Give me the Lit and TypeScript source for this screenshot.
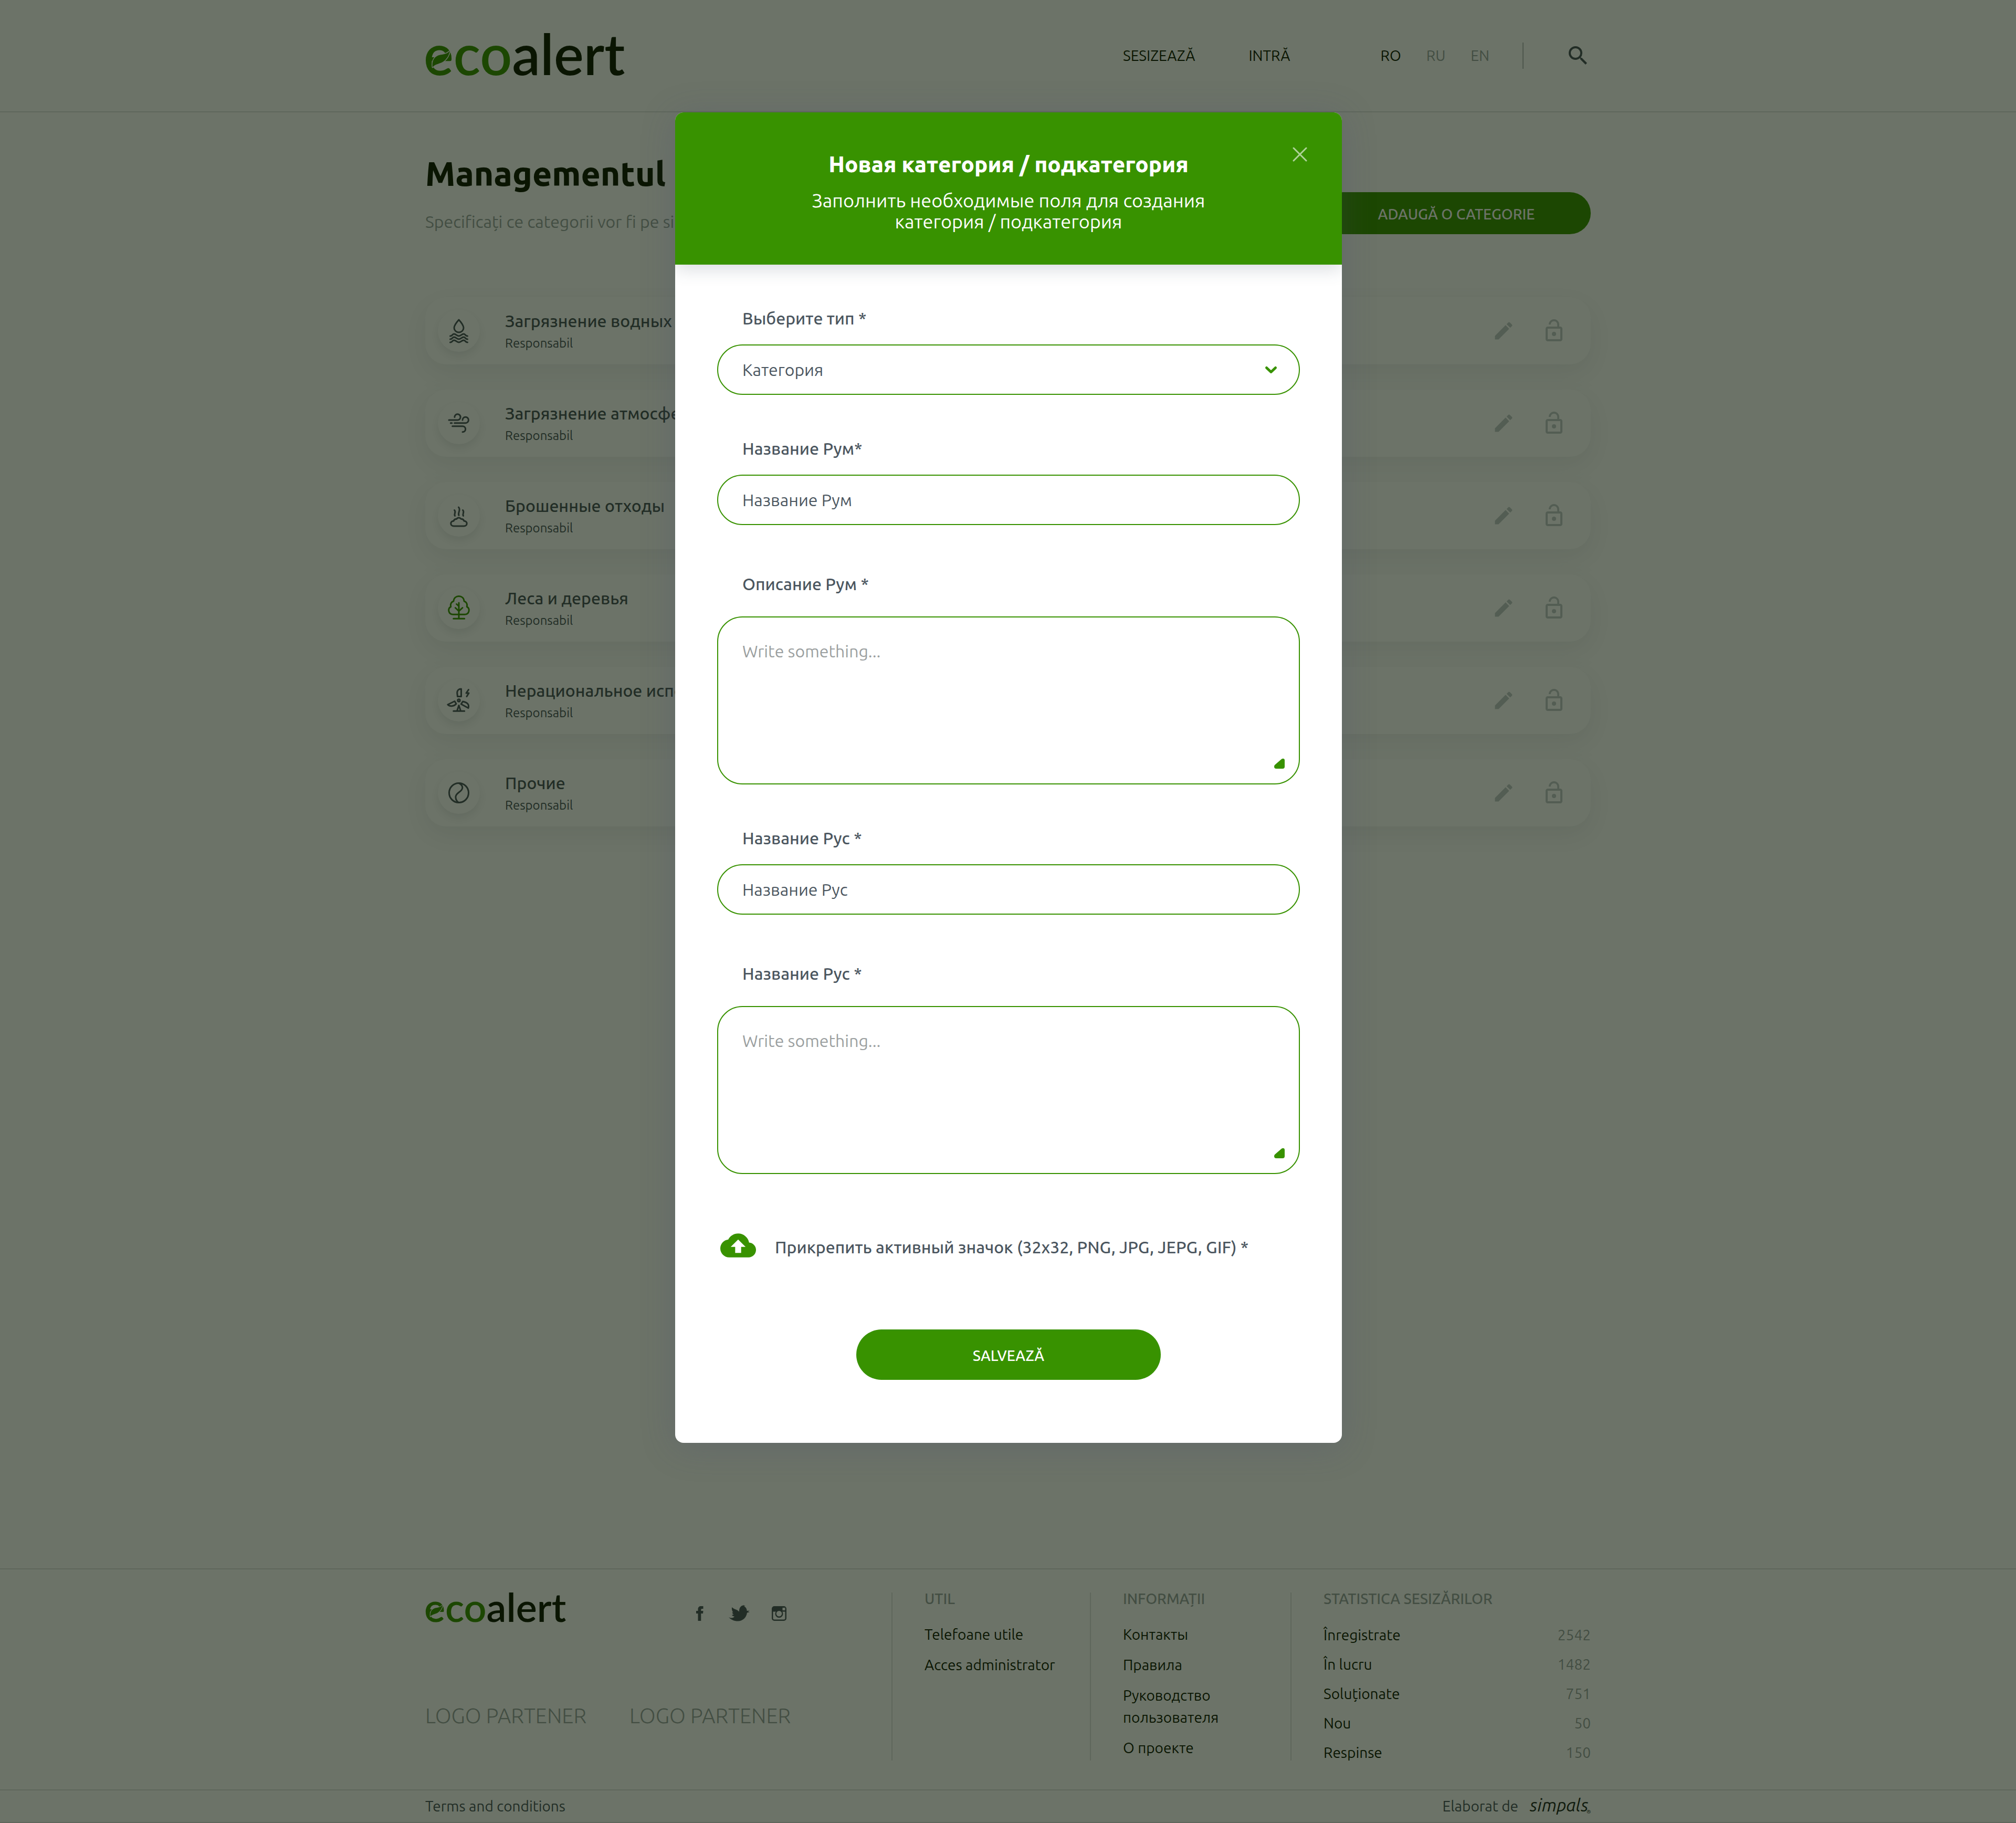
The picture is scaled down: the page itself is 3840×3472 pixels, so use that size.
import { LitElement, html, css, svg } from 'lit';
import { customElement, property, state } from 'lit/decorators.js';
import { classMap } from 'lit/directives/class-map.js';

const FONT = css`"Ubuntu", "Noto Sans", sans-serif`;

const rowIcons = {
  water: svg`
    <path d="M24 3C24 3 15 13 15 18.5a9 8.5 0 0 0 18 0C33 13 24 3 24 3z"/>
    <path d="M7.5 34c4 0 4-4 7.500-4s5 4 9 4 5.500-4 9-4 3.500 4 7.500 4"/>
    <path d="M7.500 40c4 0 4-4 7.500-4s5 4 9 4 5.500-4 9-4 3.500 4 7.500 4"/>
    <path d="M7.500 46c4 0 4-4 7.500-4s5 4 9 4 5.500-4 9-4 3.500 4 7.500 4"/>`,
  wind: svg`
    <path d="M5 18h16.500a5.600 5.600 0 1 0-5.600-5.500"/>
    <path d="M8.300 23.700h2.500M15.700 23.700h21a5.700 5.700 0 1 0-5.700-5.600"/>
    <path d="M11.700 29.700H31c7.500 0 7.500 11 0 11"/>`,
  waste: svg`
    <path d="M23.500 8c5 5-2 10 .5 15.500M15.500 13.500c4 4-1.500 7 1 11M31.500 13.500c4 4-1.500 7 1 11"/>
    <path d="M14.500 44h19c7.500 0 7.500-9.500.500-9.800-1-3-3-4-5.500-3.700-3-3.200-6.500-3.200-9 0-2.500-.300-4.500.700-5.500 3.700-7 .300-7 9.800.500 9.800z"/>`,
  tree: svg`
    <path d="M13 36.200c-9 0-11-11-4.300-14.500-1.500-5 1-9.500 5.300-10.700C14.500 4.500 19 1.500 24 1.500s9.500 3 10 9.500c4.300 1.200 6.800 5.700 5.300 10.700C46 25.200 44 36.200 35 36.200z"/>
    <path d="M24 14v30M19.500 16.500 24 20.500M17.300 23.500 24 30l7-6.500M13.700 44.200h21"/>`,
  turbine: svg`
    <path d="M28.500 2v14.500h-7l-.800-7c0-4.500 3-7.500 7.800-7.500zM42.500 3.500 38 10h5l-4 6.500"/>
    <circle cx="24" cy="24" r="2.200"/>
    <path d="M2.800 32 16 25.500l3 5C14 36 7 36 2.800 32zM31.500 26l-3.200 5L42 38.500C44.500 31 39 27.500 31.500 26z"/>
    <path d="M20.500 44 24 33.500 27.500 44M13.700 44.200h21"/>`,
  other: svg`
    <circle cx="24" cy="24" r="18.500"/>
    <path d="M24 5.500c6 2.500 8.500 8 5.500 12.500-3 4.800-10.500 6.500-11.500 13-.500 5 1.500 8.500 5.500 11.500"/>`,
};

type IconName = keyof typeof rowIcons;

interface Category {
  icon: IconName;
  title: string;
  active?: boolean;
}

@customElement('eco-logo')
class EcoLogo extends LitElement {
  static styles = css`
    :host { display: block; }
    .mark { display: block; width: 100%; height: auto; overflow: visible; }
    .word { font: 600 107px "Lato", sans-serif; fill: #0a1600; }
    .eco { fill: #389200; }
    .leaf { fill: #389200; stroke: #fff; stroke-width: 3; stroke-linejoin: round; paint-order: stroke; }
  `;
  render() {
    return html`
      <svg class="mark" viewBox="0 0 380 84" role="img" aria-label="ecoalert">
        <text class="word" x="-3" y="80"><tspan class="eco">eco</tspan>alert</text>
        <path class="leaf" d="M14 65c-2-15 6-23 18-24 6-1 11-3 15-7-2 9-6 15-11 19-7 6-17 5-22 12z"/>
      </svg>`;
  }
}

@customElement('category-row')
class CategoryRow extends LitElement {
  @property({ attribute: false }) category!: Category;
  static styles = css`
    :host { display: block; }
    .card {
      display: flex; align-items: center; box-sizing: border-box; height: 128px;
      padding: 0 46px 0 24px; border-radius: 40px; background: #fff;
      box-shadow: 0 16px 48px rgba(70, 82, 90, 0.1);
    }
    .badge {
      display: grid; place-items: center; width: 80px; height: 80px; border-radius: 50%;
      background: #fff; box-shadow: 0 8px 16px rgba(70, 82, 90, 0.12);
    }
    .glyph {
      width: 48px; height: 48px; fill: none; stroke: #46525a; stroke-width: 3;
      stroke-linecap: round; stroke-linejoin: round;
    }
    .active { stroke: #389200; }
    .text { flex: 1; display: flex; flex-direction: column; gap: 8px; padding-left: 48px; }
    .title { margin: 0; font: 550 32px/40px ${FONT}; color: #46525a; }
    .role { margin: 0; font: 400 24px/30px ${FONT}; color: #46525a; }
    .actions { display: flex; align-items: center; gap: 50px; }
    .action { display: block; padding: 0; border: 0; background: none; }
    .tool { display: block; width: 48px; height: 48px; fill: #c0c8ca; }
    .edit { width: 44px; height: 44px; }
  `;
  render() {
    const c = this.category;
    return html`
      <article class="card">
        <span class="badge">
          <svg class=${classMap({ glyph: true, active: !!c.active })} viewBox="0 0 48 48" aria-hidden="true">${rowIcons[c.icon]}</svg>
        </span>
        <div class="text">
          <h2 class="title">${c.title}</h2>
          <p class="role">Responsabil</p>
        </div>
        <div class="actions">
          <button class="action" type="button">
            <svg class="tool edit" viewBox="0 0 24 24"><path d="M3 17.250V21h3.750L17.810 9.940l-3.750-3.750L3 17.250zM20.710 7.040a.996.996 0 0 0 0-1.410l-2.340-2.340a.996.996 0 0 0-1.410 0l-1.830 1.830 3.750 3.750 1.830-1.830z"/></svg>
          </button>
          <button class="action" type="button">
            <svg class="tool" viewBox="0 0 24 24"><path d="M12 17a2 2 0 1 0 0-4 2 2 0 0 0 0 4zm6-9h-1V6c0-2.760-2.240-5-5-5S7 3.240 7 6h1.900c0-1.710 1.390-3.100 3.100-3.100s3.100 1.390 3.100 3.100v2H6c-1.100 0-2 .9-2 2v10c0 1.100.9 2 2 2h12c1.100 0 2-.9 2-2V10c0-1.100-.9-2-2-2zm0 12H6V10h12v10z"/></svg>
          </button>
        </div>
      </article>`;
  }
}

@customElement('category-dialog')
class CategoryDialog extends LitElement {
  static styles = css`
    :host { display: block; font-family: ${FONT}; }
    .dialog {
      position: relative; border-radius: 16px; background: #fff; overflow: hidden;
    }
    .head {
      display: flex; flex-direction: column; align-items: center; gap: 24px;
      padding: 74px 80px 62px; background: #389200; color: #fff; text-align: center;
      box-shadow: 0 8px 32px rgba(60, 75, 95, 0.2);
    }
    .title { margin: 0; font-weight: 800; font-size: 42px; line-height: 50px; }
    .lead { margin: 0; max-width: 800px; font-size: 36px; line-height: 40px; }
    .close { position: absolute; top: 60px; right: 60px; padding: 6px; border: 0; background: none; }
    .close-icon { display: block; width: 28px; height: 28px; fill: none; stroke: #fff; stroke-opacity: 0.6; stroke-width: 3; stroke-linecap: round; }
    .form { display: flex; flex-direction: column; gap: 82px; padding: 82px 80px 120px; }
    .field { display: flex; flex-direction: column; gap: 30px; }
    .area { gap: 42px; padding-top: 10px; }
    .label { padding-left: 48px; font-weight: 550; font-size: 32px; line-height: 40px; color: #4b565f; }
    .box { position: relative; display: flex; }
    .control {
      flex: 1; min-width: 0; box-sizing: border-box; height: 96px; margin: 0; padding: 0 46px;
      border: 2px solid #389200; border-radius: 48px; background: #fff; appearance: none;
      font: 400 32px/40px ${FONT}; color: #4b565f; outline: 0;
    }
    .multi { height: 320px; padding: 44px 46px; resize: none; }
    .multi::placeholder { color: #9b9fa0; opacity: 1; }
    .chevron {
      position: absolute; right: 40px; top: 36px; width: 30px; height: 24px;
      fill: none; stroke: #389200; stroke-width: 5; stroke-linecap: round; stroke-linejoin: round; pointer-events: none;
    }
    .grip { position: absolute; right: 29px; bottom: 30px; width: 20px; height: 20px; fill: #389200; pointer-events: none; }
    .upload { display: flex; align-items: center; gap: 36px; margin-top: 20px; padding-left: 6px; }
    .upload-text { padding-top: 6px; font-weight: 550; font-size: 32px; line-height: 40px; color: #4b565f; }
    .cloud { width: 68px; height: 68px; fill: #389200; }
    .file { position: absolute; width: 1px; height: 1px; opacity: 0; }
    .save {
      align-self: center; width: 580px; height: 96px; margin-top: 44px; padding: 4px 0 0; border: 0; border-radius: 48px;
      background: #389200; color: #fff; font: 500 28px/32px ${FONT};
    }
  `;

  private input(id: string, label: string, value: string) {
    return html`
      <div class="field">
        <label class="label" for=${id}>${label}</label>
        <div class="box"><input class="control" id=${id} type="text" .value=${value} /></div>
      </div>`;
  }

  private area(id: string, label: string) {
    return html`
      <div class="field area">
        <label class="label" for=${id}>${label}</label>
        <div class="box">
          <textarea class="control multi" id=${id} placeholder="Write something..."></textarea>
          <svg class="grip" viewBox="0 0 20 20" aria-hidden="true"><path d="M14 1.800C16 0 20 0 20 4v12a4 4 0 0 1-4 4H4c-4 0-5-4-3-7z"/></svg>
        </div>
      </div>`;
  }

  render() {
    return html`
      <section class="dialog" role="dialog" aria-labelledby="dialog-title">
        <header class="head">
          <h2 class="title" id="dialog-title">Новая категория / подкатегория</h2>
          <p class="lead">Заполнить необходимые поля для создания категория / подкатегория</p>
          <button class="close" type="button">
            <svg class="close-icon" viewBox="0 0 28 28"><path d="M2 2l24 24M26 2L2 26"/></svg>
          </button>
        </header>
        <form class="form">
          <div class="field">
            <label class="label" for="type">Выберите тип *</label>
            <div class="box">
              <select class="control" id="type"><option>Категория</option></select>
              <svg class="chevron" viewBox="0 0 30 24" aria-hidden="true"><path d="M6.500 8.500l8.500 8 8.500-8"/></svg>
            </div>
          </div>
          ${this.input('name-ro', 'Название Рум*', 'Название Рум')}
          ${this.area('text-ro', 'Описание Рум *')}
          ${this.input('name-ru', 'Название Рус *', 'Название Рус')}
          ${this.area('text-ru', 'Название Рус *')}
          <label class="upload" for="icon-file">
            <svg class="cloud" viewBox="0 0 24 24" aria-hidden="true"><path d="M19.350 10.040C18.670 6.590 15.640 4 12 4 9.110 4 6.600 5.640 5.350 8.040 2.340 8.360 0 10.910 0 14c0 3.310 2.690 6 6 6h13c2.760 0 5-2.240 5-5 0-2.640-2.050-4.780-4.650-4.960zM14 13v4h-4v-4H7l5-5 5 5h-3z"/></svg>
            <span class="upload-text">Прикрепить активный значок (32x32, PNG, JPG, JEPG, GIF) *</span>
            <input class="file" id="icon-file" type="file" />
          </label>
          <button class="save" type="button">SALVEAZĂ</button>
        </form>
      </section>`;
  }
}

@customElement('site-footer')
class SiteFooter extends LitElement {
  static styles = css`
    :host { display: block; font: 400 28px/42px ${FONT}; color: #0a1600; }
    a { color: inherit; text-decoration: none; }
    .footer { border-top: 2px solid #dfe2e2; border-bottom: 2px solid #dfe2e2; }
    .columns {
      display: grid; grid-template-columns: 888fr 378fr 382fr 572fr;
      max-width: 2220px; margin: 0 auto; padding: 44px 0 55px;
    }
    .brand { display: flex; flex-direction: column; gap: 152px; }
    .brand-row { display: flex; justify-content: space-between; align-items: flex-end; max-width: 696px; }
    .logo { width: 268px; }
    .social { display: flex; gap: 32px; padding-bottom: 3px; }
    .social-link { display: block; }
    .social-icon { display: block; width: 44px; height: 32px; fill: #46525a; }
    .partners { display: flex; gap: 82px; }
    .partner { font-weight: 300; font-size: 40px; line-height: 48px; color: #98a2a2; }
    .column { display: flex; flex-direction: column; gap: 35px; padding-left: 61px; border-left: 2px solid #dfe2e2; }
    .heading { margin: 0; font-weight: 500; font-size: 28px; line-height: 24px; color: #98a2a2; }
    .links { display: flex; flex-direction: column; gap: 16px; margin: 0; padding: 0; list-style: none; }
    .stats { display: flex; flex-direction: column; gap: 26px; margin: 0; padding-top: 7px; line-height: 30px; }
    .stat { display: flex; justify-content: space-between; }
    .count { margin: 0; color: #98a2a2; }
    .rule { border-top: 2px solid #dfe2e2; }
    .legal {
      display: flex; align-items: center; justify-content: space-between; height: 60px;
      max-width: 2220px; margin: 0 auto; color: #46525a;
    }
    .credit { display: flex; align-items: center; gap: 22px; }
    .maker { display: block; width: 116px; height: 52px; overflow: visible; }
    .maker-name { font: italic 400 34px ${FONT}; fill: #1a2420; }
    .maker-mark { font: 400 10px ${FONT}; fill: #1a2420; }
  `;
  private stats: [string, string][] = [
    ['Înregistrate', '2542'],
    ['În lucru', '1482'],
    ['Soluționate', '751'],
    ['Nou', '50'],
    ['Respinse', '150'],
  ];
  private links(items: string[]) {
    return html`<ul class="links">${items.map((t) => html`<li><a href="#">${t}</a></li>`)}</ul>`;
  }
  render() {
    return html`
      <footer class="footer">
        <div class="columns">
          <div class="brand">
            <div class="brand-row">
              <eco-logo class="logo"></eco-logo>
              <div class="social">
                <a class="social-link" href="#" aria-label="Facebook"><svg class="social-icon" viewBox="0 0 44 32"><path d="M19.500 30V16H16v-5h3.500V7.500C19.500 4 22 2 25 2h4.500v5H27c-1.200 0-1.700.700-1.700 1.800V11h4.200l-.500 5h-3.700v14z"/></svg></a>
                <a class="social-link" href="#" aria-label="Twitter"><svg class="social-icon" viewBox="0 0 44 32"><path d="M2 23c5 2.500 8.500 2 11-1.200-3-.400-4.700-1.800-5-3.300.8.200 1.600.100 2.400 0 .500-.100-1-.600 1.300-.400-2.300-1.500-3-3-3-4.500l2 .500C8.500 11.500 7.500 8 8 4c4 4 10.500 4.500 14 8.500C21.500 6.500 24.500 1 29.500.500l2.500-.500-1.200 1.500 3-.500-2.300 1.800c3.500 1.200 5 4.700 5.200 8.200l5.300-.400-3.500 2 3.500.600-5 1.300C35.500 24 29 30.300 19.500 30.500 12.500 30.600 6.500 28 2 23z"/></svg></a>
                <a class="social-link" href="#" aria-label="Instagram"><svg class="social-icon" viewBox="0 0 44 32"><path fill-rule="evenodd" d="M13 2h18a5 5 0 0 1 5 5v18a5 5 0 0 1-5 5H13a5 5 0 0 1-5-5V7a5 5 0 0 1 5-5zM28.500 5v5h5V5zM10.500 12.500V25a2.500 2.500 0 0 0 2.500 2.500h18a2.500 2.500 0 0 0 2.500-2.500V12.500h-5.200a7.500 7.500 0 1 1-12.600 0zM22 11a5.300 5.300 0 1 0 0 10.600A5.300 5.300 0 0 0 22 11z"/></svg></a>
              </div>
            </div>
            <div class="partners">
              <a class="partner" href="#">LOGO PARTENER</a>
              <a class="partner" href="#">LOGO PARTENER</a>
            </div>
          </div>
          <nav class="column">
            <h3 class="heading">UTIL</h3>
            ${this.links(['Telefoane utile', 'Acces administrator'])}
          </nav>
          <nav class="column">
            <h3 class="heading">INFORMAȚII</h3>
            ${this.links(['Контакты', 'Правила', 'Руководство пользователя', 'О проекте'])}
          </nav>
          <div class="column">
            <h3 class="heading">STATISTICA SESIZĂRILOR</h3>
            <dl class="stats">
              ${this.stats.map(([k, v]) => html`<div class="stat"><dt>${k}</dt><dd class="count">${v}</dd></div>`)}
            </dl>
          </div>
        </div>
        <div class="rule">
          <div class="legal">
            <a href="#">Terms and conditions</a>
            <span class="credit">Elaborat de
              <svg class="maker" viewBox="0 0 116 52" role="img" aria-label="simpals">
                <text class="maker-name" x="0" y="36">simpals</text>
                <text class="maker-mark" x="108" y="40">®</text>
              </svg>
            </span>
          </div>
        </div>
      </footer>`;
  }
}

@customElement('app-root')
class AppRoot extends LitElement {
  @state() private categories: Category[] = [
    { icon: 'water', title: 'Загрязнение водных' },
    { icon: 'wind', title: 'Загрязнение атмосферы' },
    { icon: 'waste', title: 'Брошенные отходы' },
    { icon: 'tree', title: 'Леса и деревья', active: true },
    { icon: 'turbine', title: 'Нерациональное использование' },
    { icon: 'other', title: 'Прочие' },
  ];
  static styles = css`
    :host { display: block; font: 400 28px/32px ${FONT}; color: #0a1600; }
    .page { position: relative; display: flex; flex-direction: column; min-height: 100vh; background: #fff; }
    .bar { border-bottom: 2px solid #dfe2e2; }
    .bar-inner { display: flex; align-items: center; height: 212px; max-width: 2220px; margin: 0 auto; }
    .logo { width: 380px; margin-right: auto; padding-bottom: 2px; }
    .nav, .langs { display: flex; }
    .nav { gap: 102px; margin-right: 172px; }
    .langs { gap: 48px; margin-right: 63px; }
    .link { color: #0a1600; text-decoration: none; }
    .muted { color: #98a2a2; }
    .split { width: 2px; height: 50px; margin-right: 80px; background: #b4babb; }
    .search { display: block; padding: 0; border: 0; background: none; }
    .search-icon { display: block; width: 48px; height: 48px; fill: #46525a; }
    .main { flex: 1; box-sizing: border-box; width: 100%; max-width: 2220px; margin: 0 auto; padding: 79px 0 120px; }
    .intro { display: flex; justify-content: space-between; align-items: flex-end; margin-bottom: 120px; }
    .title { margin: 0 0 35px; font-weight: 800; font-size: 64px; line-height: 74px; }
    .hint { margin: 0; padding-bottom: 4px; font-size: 32px; line-height: 40px; color: #98a2a2; }
    .add { width: 512px; height: 80px; padding: 4px 0 0; border: 0; border-radius: 40px; background: #389200; color: #fff; font: 500 28px/32px ${FONT}; }
    .list { display: flex; flex-direction: column; gap: 48px; }
    .overlay { position: absolute; inset: 0; padding: 214px 39px 0 41px; background: rgba(10, 22, 3, 0.6); }
    .window { max-width: 1270px; margin: 0 auto; border-radius: 16px; box-shadow: 0 8px 64px rgba(70, 75, 110, 0.25); }
  `;
  render() {
    return html`
      <div class="page">
        <header class="bar">
          <div class="bar-inner">
            <eco-logo class="logo"></eco-logo>
            <nav class="nav">
              <a class="link" href="#">SESIZEAZĂ</a>
              <a class="link" href="#">INTRĂ</a>
            </nav>
            <div class="langs">
              <a class="link" href="#">RO</a>
              <a class="link muted" href="#">RU</a>
              <a class="link muted" href="#">EN</a>
            </div>
            <span class="split"></span>
            <button class="search" type="button">
              <svg class="search-icon" viewBox="0 0 24 24"><path d="M15.500 14h-.790l-.280-.270A6.471 6.471 0 0 0 16 9.500 6.500 6.500 0 1 0 9.500 16c1.610 0 3.090-.590 4.230-1.570l.270.280v.790l5 4.990L20.490 19l-4.990-5zm-6 0C7.010 14 5 11.990 5 9.500S7.010 5 9.500 5 14 7.010 14 9.500 11.990 14 9.500 14z"/></svg>
            </button>
          </div>
        </header>
        <main class="main">
          <div class="intro">
            <div>
              <h1 class="title">Managementul</h1>
              <p class="hint">Specificați ce categorii vor fi pe site</p>
            </div>
            <button class="add" type="button">ADAUGĂ O CATEGORIE</button>
          </div>
          <div class="list">
            ${this.categories.map((c) => html`<category-row .category=${c}></category-row>`)}
          </div>
        </main>
        <site-footer></site-footer>
        <div class="overlay">
          <category-dialog class="window"></category-dialog>
        </div>
      </div>`;
  }
}
